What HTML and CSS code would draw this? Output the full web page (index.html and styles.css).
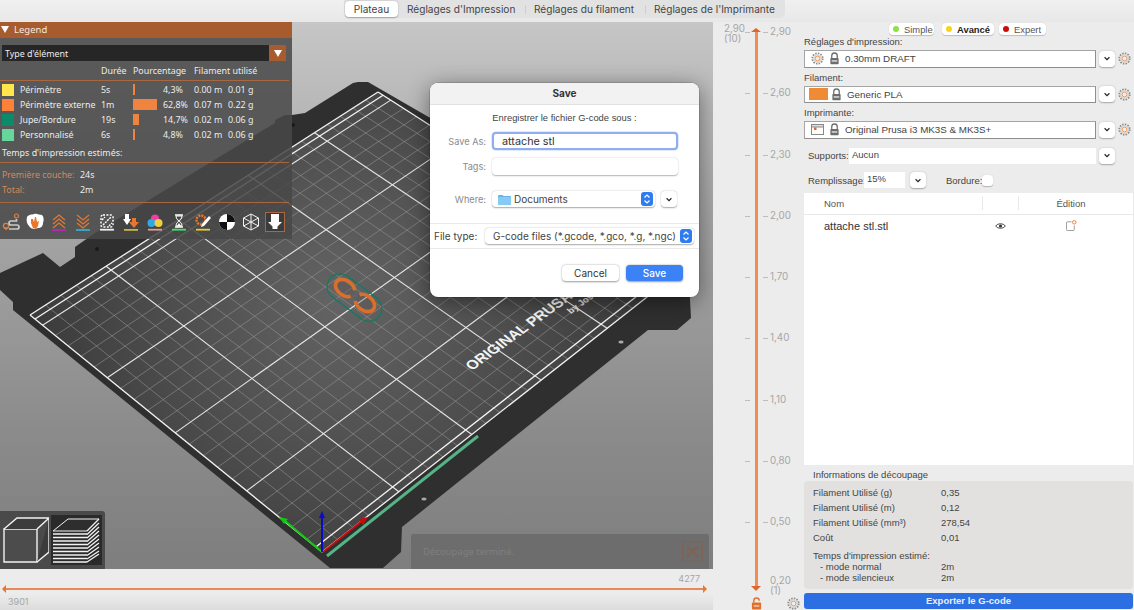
FILE: index.html
```html
<!DOCTYPE html>
<html lang="fr">
<head>
<meta charset="utf-8">
<title>PrusaSlicer</title>
<link rel="stylesheet" href="styles.css">
</head>
<body>
<svg class="defs" width="0" height="0">
  <symbol id="gear" viewBox="0 0 14 14">
    <circle cx="7" cy="7" r="5.6" fill="none" stroke="#8d8d8d" stroke-width="2" stroke-dasharray="1.6 1.3"/>
    <circle cx="7" cy="7" r="4.2" fill="#f0eeec" stroke="#c9c3bd" stroke-width=".8"/>
    <circle cx="7" cy="7" r="2.6" fill="none" stroke="#e8935a" stroke-width="1"/>
  </symbol>
  <symbol id="lock" viewBox="0 0 12 14">
    <path d="M3 6.5V4a3 3 0 0 1 6 0v2.5" fill="none" stroke="#6d6d6d" stroke-width="1.4"/>
    <rect x="1.5" y="6.5" width="9" height="6.8" rx=".8" fill="#6d6d6d"/>
    <rect x="3" y="9" width="6" height="1.4" fill="#eee"/>
  </symbol>
  <symbol id="chev" viewBox="0 0 8 5">
    <path d="M1.6 1.3 4 3.6l2.4-2.3" fill="none" stroke="#222" stroke-width="1.2"/>
  </symbol>
  <symbol id="stepper" viewBox="0 0 12 14">
    <rect width="12" height="14" rx="3" fill="#2f7bf2"/>
    <path d="M3.5 5.5 6 3l2.5 2.5M3.5 8.5 6 11l2.5-2.5" fill="none" stroke="#fff" stroke-width="1.2"/>
  </symbol>
</svg>

<header class="topbar">
  <nav class="tabs">
    <span class="tab tab-on">Plateau</span>
    <span class="tab tab-a">Réglages d'Impression</span>
    <i class="tab-sep"></i>
    <span class="tab tab-b">Réglages du filament</span>
    <i class="tab-sep"></i>
    <span class="tab tab-c">Réglages de l'Imprimante</span>
  </nav>
</header>

<main class="main">
  <div class="left">
    <section class="canvas">
      <svg class="scene" viewBox="0 22 713 547" width="713" height="547">
        <defs>
          <radialGradient id="bed" gradientUnits="userSpaceOnUse" cx="340" cy="300" r="300">
            <stop offset="0" stop-color="#646464"/>
            <stop offset="1" stop-color="#3c3c3c"/>
          </radialGradient>
        </defs>
        <polygon class="plate" points="0,273 43,253 60,267 75,257 75,247 95,233 275,123 275,120 285,115 292,115 305,113 353,83 358,82 368,82 690,268 690,300 691,318 677,330 648,330 402,527 401,552 383,568 330,568 13,310 13,302 0,290"/>
        <circle class="hole" cx="293" cy="125" r="2"/>
        <circle class="hole" cx="97" cy="249" r="2"/>
        <ellipse class="hole-l" cx="424" cy="499" rx="3" ry="2"/>
        <ellipse class="hole-l" cx="621" cy="342" rx="3" ry="2"/>
        <g id="grid"></g>
        <text class="bed-title" transform="translate(472 371) rotate(-36) skewX(14)">ORIGINAL PRUSA i3</text>
        <text class="bed-sub" transform="translate(571 314) rotate(-36) skewX(14)">by Josef Prusa</text>
        <line class="custom" x1="327" y1="556" x2="478" y2="436"/>
        <rect class="skirt" x="-31" y="-13" width="62" height="26" rx="13" transform="translate(354.500 297.500) rotate(37)"/>
        <ellipse class="print-ring" cx="345" cy="288" rx="10.500" ry="7.500" transform="rotate(36 345 288)" stroke-dasharray="49 7" stroke-dashoffset="-3.500"/>
        <ellipse class="print-ring" cx="365" cy="303" rx="10.500" ry="7.500" transform="rotate(36 365 303)" stroke-dasharray="24 8 24 0"/>
        <line class="ax-g" x1="322" y1="552" x2="284" y2="520"/>
        <polygon class="ax-g-h" points="279,517 288,519 284,524"/>
        <line class="ax-b" x1="322" y1="552" x2="322" y2="516"/>
        <polygon class="ax-b-h" points="322,511 325,518 319,518"/>
        <line class="ax-r" x1="323" y1="552" x2="362" y2="521"/>
        <polygon class="ax-r-h" points="368,517 363,525 359,519"/>
      </svg>

      <aside class="legend">
        <h2 class="legend-head"><i class="tri-down"></i>Legend</h2>
        <div class="legend-combo"><span class="combo-text">Type d'élément</span><span class="combo-btn"><i class="tri-down"></i></span></div>
        <div class="lg-row lg-titles"><span></span><span></span><span>Durée</span><span class="span2">Pourcentage</span><span class="span2">Filament utilisé</span></div>
        <hr class="lg-sep lg-sep-a">
        <div class="lg-row"><i class="sw sw-1"></i><span>Périmètre</span><span>5s</span><span><i class="bar" style="width:2px"></i></span><span>4,3%</span><span>0.00 m</span><span>0.01 g</span></div>
        <div class="lg-row"><i class="sw sw-2"></i><span>Périmètre externe</span><span>1m</span><span><i class="bar" style="width:24px"></i></span><span>62,8%</span><span>0.07 m</span><span>0.22 g</span></div>
        <div class="lg-row"><i class="sw sw-3"></i><span>Jupe/Bordure</span><span>19s</span><span><i class="bar" style="width:6px"></i></span><span>14,7%</span><span>0.02 m</span><span>0.06 g</span></div>
        <div class="lg-row"><i class="sw sw-4"></i><span>Personnalisé</span><span>6s</span><span><i class="bar" style="width:2px"></i></span><span>4,8%</span><span>0.02 m</span><span>0.06 g</span></div>
        <p class="lg-est">Temps d'impression estimés:</p>
        <hr class="lg-sep lg-sep-b">
        <div class="lg-time"><span class="lg-key">Première couche:</span><span>24s</span></div>
        <div class="lg-time"><span class="lg-key">Total:</span><span>2m</span></div>
        <hr class="lg-sep lg-sep-c">
        <div class="lg-icons">
          <svg viewBox="0 0 18 18" class="lic"><circle cx="4" cy="13" r="2.600" fill="none" stroke="#d9824a" stroke-width="1.300"/><path d="M4 17.500l-2.300-3.300h4.600z" fill="#d9824a"/><circle cx="14.500" cy="3" r="2" fill="none" stroke="#d9824a" stroke-width="1.200"/><path d="M14.500 6v2H9a2 2 0 0 0 0 4h6a2 2 0 0 1 0 4H7" fill="none" stroke="#c9c9c9" stroke-width="1.700"/></svg>
          <svg viewBox="0 0 18 18" class="lic"><path d="M1 4c2-3 5-2 7-3 3-1 5 1 8 1 2 2 2 5 1 8 0 3-2 5-5 5l-3 1c-3 0-5-1-6-3-2-2-3-5-2-9z" fill="#fff"/><path d="M5 6l2 0 1 3 1-5 1 0 1 5 2-1-1 5-2 3-3-1-2-5z" fill="#e8772e"/></svg>
          <svg viewBox="0 0 18 18" class="lic"><path d="M3 7l6-5 6 5M3 11l6-5 6 5M3 15l6-5 6 5" fill="none" stroke="#e8772e" stroke-width="1.200"/><rect x="2" y="16.200" width="14" height="1.600" fill="#c81fc8"/></svg>
          <svg viewBox="0 0 18 18" class="lic"><path d="M3 2l6 5 6-5M3 6l6 5 6-5M3 10l6 5 6-5" fill="none" stroke="#e8772e" stroke-width="1.200"/><rect x="2" y="16.200" width="14" height="1.600" fill="#3bb4d8"/></svg>
          <svg viewBox="0 0 18 18" class="lic"><rect x="3" y="2" width="12" height="12" rx="2" fill="none" stroke="#fff" stroke-width="1.400" stroke-dasharray="2 1.400"/><path d="M5 12l8-8M4 7l3-3M11 13l3-3" stroke="#fff" stroke-width="1.400" stroke-dasharray="2 1"/><rect x="2" y="15.800" width="14" height="1.800" fill="#eee"/></svg>
          <svg viewBox="0 0 18 18" class="lic"><path d="M3 1h4v5h2l-4 6-4-6h2z" fill="#fff"/><path d="M10 5h4v4h3l-5 6-5-6h3z" fill="#e8772e"/><rect x="2" y="16" width="14" height="1.800" fill="#c8b545"/></svg>
          <svg viewBox="0 0 18 18" class="lic"><circle cx="9" cy="5.500" r="4" fill="#ee3fa0"/><circle cx="5.500" cy="10" r="4" fill="#2fa8e8"/><circle cx="12.500" cy="10" r="4" fill="#f2cf3c"/><rect x="2" y="15.800" width="14" height="1.800" fill="#e59a9a"/></svg>
          <svg viewBox="0 0 18 18" class="lic"><path d="M5 2h8M5 14h8" stroke="#fff" stroke-width="1.500"/><path d="M6 3c0 3 2 4 3 5 1-1 3-2 3-5zM6 13c0-3 2-4 3-5 1 1 3 2 3 5z" fill="none" stroke="#fff" stroke-width="1"/><path d="M7 13l2-3 2 3z" fill="#fff"/><rect x="2" y="15.800" width="14" height="1.800" fill="#3ee06a"/></svg>
          <svg viewBox="0 0 18 18" class="lic"><circle cx="7" cy="7" r="4.500" fill="none" stroke="#e8772e" stroke-width="2.400" stroke-dasharray="2 1"/><path d="M15 3l2 2-7 8-3 1 1-3z" fill="#fff"/><rect x="2" y="15.800" width="14" height="1.800" fill="#e6cb3a"/></svg>
          <svg viewBox="0 0 18 18" class="lic"><circle cx="9" cy="9" r="8" fill="#fff"/><path d="M9 1a8 8 0 0 1 8 8H9zM9 9H1a8 8 0 0 0 8 8z" fill="#111"/></svg>
          <svg viewBox="0 0 18 18" class="lic"><path d="M9 1l7.500 4v8L9 17l-7.500-4V5zM1.500 5 9 9l7.500-4M9 9v8M9 1v8M1.500 13 9 9l7.500 4" fill="none" stroke="#f2f2f2" stroke-width="1"/></svg>
          <span class="lic-on"><svg viewBox="0 0 18 18" class="lic"><path d="M5 1h8v8h3l-4.500 4.500V16h-5v-2.500L2 9h3z" fill="#fff"/></svg></span>
        </div>
      </aside>

      <aside class="views">
        <svg class="view-cube" viewBox="0 0 48 50" width="48" height="50"><path d="M3 14h33v33H3z" fill="#4c4c4c" stroke="#f2f2f2" stroke-width="1.400"/><path d="M3 14 16 3h32L36 14M48 3v34L36 47" fill="#3c3c3c" stroke="#f2f2f2" stroke-width="1.400"/></svg>
        <div class="view-layers"><svg viewBox="0 0 50 50" width="50" height="50"><path d="M2 16 17 4h31L36 16z" fill="#2e2e2e" stroke="#f2f2f2" stroke-width="1"/><path d="M2 19h34M2 22.500h34M2 26h34M2 29.500h34M2 33h34M2 36.500h34M2 40h34M2 43.500h34M2 47h34M36 16 48 4M36 19.500 48 8M36 23 48 12M36 26.500 48 16M36 30 48 20M36 33.500 48 24M36 37 48 28M36 40.500 48 32M36 44 48 36M36 47 48 39" fill="none" stroke="#f2f2f2" stroke-width="1.300"/></svg></div>
      </aside>

      <aside class="note"><span>Découpage terminé.</span><span class="note-x"><svg viewBox="0 0 21 21" width="21" height="21"><rect x=".7" y=".7" width="19.600" height="19.600" rx="1.500" fill="none" stroke="#7f6355" stroke-width="1.200"/><path d="M5 5l11 11M16 5 5 16" stroke="#7f6355" stroke-width="2"/></svg></span></aside>

      <div class="dialog">
        <div class="dlg-title">Save</div>
        <p class="dlg-msg">Enregistrer le fichier G-code sous :</p>
        <div class="dlg-row dlg-saveas"><label>Save As:</label><span class="dlg-input dlg-focus">attache stl</span></div>
        <div class="dlg-row dlg-tags"><label>Tags:</label><span class="dlg-input dlg-plain"></span></div>
        <div class="dlg-row dlg-where"><label>Where:</label>
          <span class="dlg-select"><svg class="folder" viewBox="0 0 13 11" width="13" height="11"><path d="M0 2a1 1 0 0 1 1-1h3.500l1 1H12a1 1 0 0 1 1 1v7a1 1 0 0 1-1 1H1a1 1 0 0 1-1-1z" fill="#62b4ea"/><rect y="3" width="13" height="8" rx="1" fill="#86cbf3"/></svg>Documents<svg class="stepper" width="12" height="14"><use href="#stepper"/></svg></span>
          <span class="dlg-more"><svg width="8" height="5"><use href="#chev"/></svg></span>
        </div>
        <div class="dlg-type"><label>File type:</label><span class="dlg-select dlg-select-type">G-code files (*.gcode, *.gco, *.g, *.ngc)<svg class="stepper" width="12" height="14"><use href="#stepper"/></svg></span></div>
        <div class="dlg-actions"><span class="btn">Cancel</span><span class="btn btn-blue">Save</span></div>
      </div>
    </section>

    <section class="hslider">
      <div class="hs-top">4277</div>
      <div class="hs-line"><i class="tri-l"></i><i class="hs-bar"></i><i class="tri-r"></i></div>
      <div class="hs-bottom">3901</div>
    </section>
  </div>

  <section class="vslider">
    <i class="vs-line"></i><i class="vs-top"></i><i class="vs-bot"></i>
    <div class="vs-row"><span class="vs-left">2,90<br>(10)</span><i class="tick"></i><i class="tick tick-r"></i><span>2,90</span></div>
    <div class="vs-row"><span class="vs-left"></span><i class="tick"></i><i class="tick tick-r"></i><span>2,60</span></div>
    <div class="vs-row"><span class="vs-left"></span><i class="tick"></i><i class="tick tick-r"></i><span>2,30</span></div>
    <div class="vs-row"><span class="vs-left"></span><i class="tick"></i><i class="tick tick-r"></i><span>2,00</span></div>
    <div class="vs-row"><span class="vs-left"></span><i class="tick"></i><i class="tick tick-r"></i><span>1,70</span></div>
    <div class="vs-row"><span class="vs-left"></span><i class="tick"></i><i class="tick tick-r"></i><span>1,40</span></div>
    <div class="vs-row"><span class="vs-left"></span><i class="tick"></i><i class="tick tick-r"></i><span>1,10</span></div>
    <div class="vs-row"><span class="vs-left"></span><i class="tick"></i><i class="tick tick-r"></i><span>0,80</span></div>
    <div class="vs-row"><span class="vs-left"></span><i class="tick"></i><i class="tick tick-r"></i><span>0,50</span></div>
    <div class="vs-end">0,20<br>(1)</div>
    <div class="vs-foot">
      <svg viewBox="0 0 12 14" width="11" height="13"><path d="M3 6V4a3 3 0 0 1 6 0" fill="none" stroke="#e0702c" stroke-width="1.500"/><rect x="1" y="6" width="10" height="7.500" rx=".8" fill="#e0702c"/><rect x="3" y="9" width="6" height="1.400" fill="#f6d7c2"/></svg>
      <svg width="13" height="13" class="vs-gear"><use href="#gear"/></svg>
    </div>
  </section>

  <aside class="side">
    <div class="modes">
      <span class="pill pill-s"><i class="dot dot-g"></i>Simple</span>
      <span class="pill pill-a"><i class="dot dot-y"></i><b>Avancé</b></span>
      <span class="pill pill-e"><i class="dot dot-r"></i>Expert</span>
    </div>
    <div class="p-label">Réglages d'impression:</div>
    <div class="preset"><div class="combo"><svg class="ic-gear" width="13" height="13"><use href="#gear"/></svg><svg class="ic-lock" width="11" height="13"><use href="#lock"/></svg><span>0.30mm DRAFT</span></div><span class="drop"><svg width="8" height="5"><use href="#chev"/></svg></span><svg class="gear-r" width="13" height="13"><use href="#gear"/></svg></div>
    <div class="p-label">Filament:</div>
    <div class="preset"><div class="combo"><i class="fil-color"></i><svg class="ic-lock" width="11" height="13"><use href="#lock"/></svg><span>Generic PLA</span></div><span class="drop"><svg width="8" height="5"><use href="#chev"/></svg></span><svg class="gear-r" width="13" height="13"><use href="#gear"/></svg></div>
    <div class="p-label">Imprimante:</div>
    <div class="preset"><div class="combo"><svg class="ic-gear" viewBox="0 0 13 11" width="13" height="11"><rect x=".5" y=".5" width="12" height="10" fill="#fff" stroke="#888"/><rect x=".5" y=".5" width="12" height="2.500" fill="#ddd" stroke="#888"/><rect x="3" y="3.500" width="2.500" height="2.500" fill="#e8602c"/></svg><svg class="ic-lock" width="11" height="13"><use href="#lock"/></svg><span>Original Prusa i3 MK3S &amp; MK3S+</span></div><span class="drop"><svg width="8" height="5"><use href="#chev"/></svg></span><svg class="gear-r" width="13" height="13"><use href="#gear"/></svg></div>

    <div class="opt opt-support"><label>Supports:</label><span class="field field-wide">Aucun</span><span class="drop"><svg width="8" height="5"><use href="#chev"/></svg></span></div>
    <div class="opt opt-fill"><label>Remplissage:</label><span class="field field-fill">15%</span><span class="drop"><svg width="8" height="5"><use href="#chev"/></svg></span><label class="brim">Bordure:</label><i class="check"></i></div>

    <div class="objects">
      <div class="obj-head"><span class="oc-name">Nom</span><span class="oc-eye"></span><span class="oc-edit">Édition</span></div>
      <div class="obj-row"><span class="oc-name">attache stl.stl</span>
        <span class="oc-eye"><svg viewBox="0 0 12 8" width="11" height="8"><path d="M.7 4C3 .8 9 .8 11.300 4 9 7.200 3 7.200.7 4z" fill="none" stroke="#333" stroke-width="1"/><circle cx="6" cy="4" r="1.700" fill="#333"/></svg></span>
        <span class="oc-edit"><svg viewBox="0 0 12 12" width="11" height="11"><path d="M6 2H1.500a1 1 0 0 0-1 1v7.500a1 1 0 0 0 1 1H8a1 1 0 0 0 1-1V6" fill="none" stroke="#888" stroke-width=".9"/><circle cx="9" cy="2.500" r="1.900" fill="none" stroke="#e8772e" stroke-width="1"/></svg></span>
      </div>
    </div>

    <div class="info-title">Informations de découpage</div>
    <div class="info">
      <div class="i-row"><span>Filament Utilisé (g)</span><span>0,35</span></div>
      <div class="i-row"><span>Filament Utilisé (m)</span><span>0,12</span></div>
      <div class="i-row"><span>Filament Utilisé (mm³)</span><span>278,54</span></div>
      <div class="i-row"><span>Coût</span><span>0,01</span></div>
      <div class="i-row i-tight i-first"><span>Temps d'impression estimé:</span><span></span></div>
      <div class="i-row i-tight"><span class="i-ind">- mode normal</span><span>2m</span></div>
      <div class="i-row i-tight"><span class="i-ind">- mode silencieux</span><span>2m</span></div>
    </div>
    <div class="export">Exporter le G-code</div>
  </aside>
</main>
<script src="script.js"></script>
</body>
</html>
```
FILE: styles.css
```css
*{box-sizing:border-box;margin:0;padding:0}
html,body{width:1134px;height:610px;overflow:hidden}
body{background:#ececec;font-family:"Liberation Sans",Inter,sans-serif;font-size:9.5px;color:#3c3c3c;display:flex;flex-direction:column}
i{display:block;font-style:normal}
.defs{position:absolute}

.topbar{height:22px;flex:none;background:linear-gradient(#f0f0f0,#e8e8e8)}
.tabs{margin-left:344px;width:441px;height:18px;background:#e2e2e2;border-radius:0 0 5px 5px;display:flex;align-items:center;font-family:Inter,sans-serif;font-size:10.100px;color:#444}
.tab{white-space:nowrap}
.tab-on{margin-left:1px;width:53px;height:16px;line-height:16px;text-align:center;background:#fff;border-radius:4px;box-shadow:0 .5px 1.500px rgba(0,0,0,.3)}
.tab-a{margin-left:9px;width:118px}
.tab-b{margin-left:8px;width:111px}
.tab-c{margin-left:8px}
.tab-sep{width:1px;height:9px;background:#cfcfcf}

.main{flex:1;display:flex;min-height:0}
.left{width:713px;flex:none;display:flex;flex-direction:column}
.canvas{position:relative;height:547px;flex:none;overflow:hidden;background:linear-gradient(#c6c6c6 0,#a6a6a6 35%,#8b8b8b 75%,#7e7e7e 100%)}
.scene{display:block}
.plate{fill:#2f2f2f}
.hole{fill:#191919}
.hole-l{fill:#a8a8a8;stroke:#161616;stroke-width:.7}
.surface{fill:url(#bed)}
.minor{stroke:#929292;stroke-width:.6}
.major{stroke:#e6e6e6;stroke-width:1.100}
.frame{stroke:#f4f4f4;stroke-width:1.300}
.bed-title{font:700 14.500px "Liberation Sans",sans-serif;fill:#f4f4f4}
.bed-sub{font:700 9px "Liberation Sans",sans-serif;fill:#e4e4e4}
.custom{stroke:#55b485;stroke-width:3}
.skirt{fill:none;stroke:#0f7b63;stroke-width:1.200}
.print-ring{fill:rgba(90,80,75,.3);stroke:#d8702c;stroke-width:3.600}
.ax-g{stroke:#12c812;stroke-width:2}.ax-g-h{fill:#12c812}
.ax-b{stroke:#0b0bc0;stroke-width:2}.ax-b-h{fill:#0b0bc0}
.ax-r{stroke:#c80c0c;stroke-width:2}.ax-r-h{fill:#c80c0c}

.legend{position:absolute;left:0;top:0;width:292px;height:217px;background:rgba(72,72,72,.86);font-family:"Noto Sans",sans-serif;font-size:8.900px;color:#ececec}
.legend-head{height:16px;background:#a85c2e;font-weight:400;font-size:9.500px;line-height:16px;padding-left:14px;position:relative;color:#f2e8e0}
.legend-head .tri-down{position:absolute;left:1px;top:4px}
.tri-down{width:0;height:0;border-left:4px solid transparent;border-right:4px solid transparent;border-top:7px solid #fff}
.legend-combo{margin:7px 0 0 2px;width:284px;height:16px;display:flex;background:#262626}
.combo-text{flex:1;line-height:17px;padding-left:3px}
.combo-btn{width:17px;background:#a85c2e;display:flex;align-items:center;justify-content:center}
.lg-row{height:15px;line-height:15px;padding-left:2px;display:grid;grid-template-columns:18px 81px 32px 30px 31px 34px 1fr;align-items:center;white-space:nowrap}
.lg-titles{margin-top:3px;height:14px;line-height:14px}
.lg-titles .span2:nth-child(4){grid-column:4/span 2}
.lg-titles .span2:nth-child(5){grid-column:6/span 2}
.lg-sep{border:0;height:1px;background:#a8673e;margin-left:0;width:289px}
.lg-sep-a{margin-top:2px;margin-bottom:1px}
.sw{width:12px;height:12px}
.sw-1{background:#ffe64d}.sw-2{background:#ff8038}.sw-3{background:#0d8a6a}.sw-4{background:#66d69b}
.bar{height:11px;background:#ee8440}
.lg-est{margin-top:3.500px;height:14px;line-height:14px;padding-left:2px}
.lg-sep-b{margin-top:2px;margin-bottom:4px}
.lg-time{height:15px;line-height:15px;display:grid;grid-template-columns:78px 1fr;padding-left:2px;white-space:nowrap}
.lg-key{color:#d08a5c}
.lg-sep-c{margin-top:5px}
.lg-icons{display:flex;gap:6px;padding:10px 0 0 2px}
.lic{width:18px;height:18px;display:block;flex:none}
.lic-on{display:block;outline:1px solid #a8673e;width:18px;height:18px;background:#3c3c3c}

.views{position:absolute;left:0;bottom:0;width:105px;height:58px;background:#4a4a4a;border-radius:0 3px 0 0;display:flex;align-items:center;gap:2px;padding-left:1px}
.view-cube{flex:none}
.view-layers{width:51px;height:50px;background:#2a2a2a;flex:none}
.view-layers svg{display:block}

.note{position:absolute;left:411px;bottom:0;width:298px;height:35px;background:#6d6d6d;border-radius:2px 2px 0 0;display:flex;align-items:center;justify-content:space-between;padding:0 6px 0 12px;font-family:"Noto Sans",sans-serif;font-size:9.500px;color:#7f7f7f}
.note-x{display:block;height:21px}

.dialog{position:absolute;left:430px;top:61px;width:269px;height:214px;background:#fff;border-radius:8px;box-shadow:0 4px 22px rgba(0,0,0,.45),0 0 0 .5px rgba(0,0,0,.25);font-family:Inter,sans-serif;font-size:9.500px;color:#444;overflow:hidden}
.dlg-title{height:22px;line-height:21px;text-align:center;font-weight:700;font-size:10px;color:#333;background:#f2f2f2;border-bottom:1px solid #e2e2e2}
.dlg-msg{height:14px;line-height:14px;margin-top:6px;text-align:center;font-family:"Liberation Sans",sans-serif;font-size:9.400px}
.dlg-row{display:flex;align-items:center}
.dlg-row label{width:56px;text-align:right;margin-right:6px;color:#8a8a8a;flex:none;font-size:9.200px}
.dlg-saveas{height:18px;margin-top:7px}
.dlg-tags{height:17px;margin-top:8px}
.dlg-where{height:16px;margin-top:16px}
.dlg-input{display:block;width:186px;background:#fff;border-radius:4px}
.dlg-focus{height:18px;line-height:16px;font-size:10.800px;color:#333;padding-left:8px;border:2px solid #8fadf0;box-shadow:0 0 0 .5px #c4d5f8}
.dlg-plain{height:17px;box-shadow:0 .5px 1.500px rgba(0,0,0,.3)}
.dlg-select{display:flex;align-items:center;width:163px;height:16px;border-radius:4px;background:#fff;box-shadow:0 .5px 1.500px rgba(0,0,0,.35);padding-left:6px;font-size:10px;color:#444;position:relative}
.folder{margin-right:3px;flex:none}
.stepper{position:absolute;right:2px;top:1px}
.dlg-more{width:16px;height:16px;margin-left:6px;display:flex;align-items:center;justify-content:center;border-radius:4px;box-shadow:0 .5px 1.500px rgba(0,0,0,.35)}
.dlg-type{margin-top:16px;height:26px;border-top:1px solid #e8e8e8;border-bottom:1px solid #e8e8e8;display:flex;align-items:center;padding-left:4px}
.dlg-type label{font-size:10px;width:51px;flex:none;color:#444}
.dlg-select-type{width:209px;padding-left:8px;white-space:nowrap}
.dlg-actions{display:flex;gap:7px;justify-content:flex-end;margin-top:16px;padding-right:16px}
.btn{display:block;width:57px;height:16px;line-height:16px;text-align:center;border-radius:4px;font-size:10px;color:#333;background:#fff;box-shadow:0 .5px 2px rgba(0,0,0,.4)}
.btn-blue{background:#3b82f6;color:#fff;font-weight:500}

.hslider{flex:1;display:flex;flex-direction:column;background:linear-gradient(#ececec 60%,#dcdcdc)}
.hs-top{height:15px;line-height:19px;padding-right:13px;text-align:right;color:#a6a6a6;font-family:Inter,sans-serif;font-size:9px}
.hs-line{height:10px;display:flex;align-items:center;padding-left:2px}
.hs-bar{width:697px;height:2px;background:#e8885a}
.tri-l{border-top:4px solid transparent;border-bottom:4px solid transparent;border-right:4px solid #e8772e}
.tri-r{border-top:4px solid transparent;border-bottom:4px solid transparent;border-left:4px solid #e8772e}
.hs-bottom{padding-left:8px;color:#a6a6a6;font-family:Inter,sans-serif;font-size:9px;line-height:12px;margin-top:2px}

.vslider{width:90px;flex:none;position:relative;padding-top:4px;color:#a6a6a6;font-family:Inter,sans-serif;font-size:9.800px}
.vs-line{position:absolute;left:42px;top:10px;bottom:22px;width:2.500px;background:#ee8f52}
.vs-top{position:absolute;left:38px;top:6px;border-left:5px solid transparent;border-right:5px solid transparent;border-bottom:4px solid #e0662a}
.vs-bot{position:absolute;left:38px;bottom:19px;border-left:5px solid transparent;border-right:5px solid transparent;border-top:5px solid #e0662a}
.vs-row{height:61.300px;display:flex;align-items:flex-start;line-height:12px;padding-left:11px}
.vs-left{display:block;width:21px;line-height:10.400px;margin-top:-2px}
.tick{width:5px;height:1px;background:#bdbdbd;margin-top:6px;flex:none}
.tick-r{margin-left:13px;margin-right:2px}
.vs-end{margin:-2px 0 0 57px;line-height:10px;height:20px}
.vs-foot{display:flex;align-items:center;padding-left:38px;height:15px}
.vs-gear{margin-left:25px}

.side{width:331px;flex:none;display:flex;flex-direction:column;padding:1px}
.modes{height:12px;display:flex;padding-left:85px;font-size:9.400px}
.pill{display:flex;align-items:center;height:12px;background:#fff;border-radius:4px;box-shadow:0 .5px 1px rgba(0,0,0,.2);padding-left:4px;color:#555}
.pill-s{width:45px}.pill-a{width:52px;margin-left:8px;color:#222}.pill-e{width:47px;margin-left:5px}
.dot{width:6px;height:6px;border-radius:50%;margin-right:5px}
.dot-g{background:#8fe04a}.dot-y{background:#f5d51e}.dot-r{background:#c80f0f}
.p-label{height:14px;line-height:14px;font-size:9.500px;color:#444;white-space:nowrap}
.preset{display:flex;align-items:center;height:17.500px;margin-top:1px;margin-bottom:3px}
.combo{width:292px;height:17.500px;background:#fff;border:1.500px solid #a5a5a5;border-right-color:#8e8e8e;border-bottom-color:#8e8e8e;display:flex;align-items:center;padding-left:6px;font-size:9.800px;color:#444;white-space:nowrap}
.ic-gear{flex:none;margin-right:5px}
.ic-lock{flex:none;margin-right:5px}
.fil-color{width:19px;height:12px;background:#ef8a35;margin:0 3px 0 -2px;flex:none}
.drop{display:flex;align-items:center;justify-content:center;width:16px;height:16px;background:#fff;border-radius:4px;box-shadow:0 .5px 1.500px rgba(0,0,0,.3);margin-left:3px;flex:none}
.gear-r{margin-left:3px;flex:none}
.opt{display:flex;align-items:center;height:16px;color:#444}
.opt label{flex:none}
.opt-support{margin-top:6px;padding-left:4px}
.opt-support label{width:41px}
.field{display:block;height:16px;line-height:13px;background:#fff;padding-left:3px;color:#444}
.field-wide{width:247px}
.opt-fill{margin-top:8.500px;padding-left:4px}
.opt-fill label:first-child{width:56px}
.field-fill{width:41px}
.opt-fill .drop{margin-left:5px}
.brim{margin-left:20px;width:36px}
.check{width:11px;height:11px;background:#fff;border-radius:3px;box-shadow:0 .5px 1px rgba(0,0,0,.25)}
.objects{margin-top:4.500px;flex:1;background:#fff;min-height:0}
.obj-head,.obj-row{display:grid;grid-template-columns:178px 37px 1fr;align-items:center}
.obj-head{height:22px;border-bottom:1px solid #e8e8e8;color:#555}
.obj-row{height:22px;font-size:11px;color:#333}
.oc-name{padding-left:20px}
.oc-eye{display:flex;justify-content:center;align-items:center;height:14px}
.obj-head .oc-eye{border-left:1px solid #e8e8e8;border-right:1px solid #e8e8e8}
.oc-edit{display:flex;justify-content:center;padding-right:10px}
.info-title{height:15px;line-height:18px;margin-top:1px;padding-left:9px;color:#444}
.info{height:108px;background:#e2e1e0;border-radius:4px;padding:5px 0 0 9px}
.i-row{display:grid;grid-template-columns:128px 1fr;height:15px;line-height:14px;color:#444}
.i-tight{height:11px;line-height:11px}
.i-first{margin-top:4px}
.i-ind{padding-left:7px}
.export{margin-top:4px;height:16px;line-height:15px;background:#2b6fe3;border-radius:3px;text-align:center;color:#e8effb;font-weight:700}
```
FILE: script.js
```js
(function () {
  var NS = 'http://www.w3.org/2000/svg';
  var O = [322, 552], R = [670, 279], L = [30, 315], T = [378, 92];
  var dx1 = R[0] - T[0], dx2 = L[0] - T[0], sx = O[0] - R[0] + T[0] - L[0];
  var dy1 = R[1] - T[1], dy2 = L[1] - T[1], sy = O[1] - R[1] + T[1] - L[1];
  var det = dx1 * dy2 - dx2 * dy1;
  var g = (sx * dy2 - dx2 * sy) / det, h = (dx1 * sy - sx * dy1) / det;
  var a = R[0] - O[0] + g * R[0], b = L[0] - O[0] + h * L[0];
  var d = R[1] - O[1] + g * R[1], e = L[1] - O[1] + h * L[1];
  function map(x, y) {
    var u = x / 250, v = y / 210, w = g * u + h * v + 1;
    return [(a * u + b * v + O[0]) / w, (d * u + e * v + O[1]) / w];
  }
  var root = document.getElementById('grid');
  var bed = document.createElementNS(NS, 'polygon');
  bed.setAttribute('class', 'surface');
  bed.setAttribute('points', [O, R, T, L].join(' '));
  root.appendChild(bed);
  function line(x1, y1, x2, y2, cls) {
    var p = map(x1, y1), q = map(x2, y2), el = document.createElementNS(NS, 'line');
    el.setAttribute('x1', p[0]); el.setAttribute('y1', p[1]);
    el.setAttribute('x2', q[0]); el.setAttribute('y2', q[1]);
    el.setAttribute('class', cls);
    root.appendChild(el);
  }
  var x, y;
  for (x = 10; x < 250; x += 10) if (x % 50) line(x, 0, x, 210, 'minor');
  for (y = 10; y < 210; y += 10) if (y % 50) line(0, y, 250, y, 'minor');
  for (x = 50; x < 250; x += 50) line(x, 0, x, 210, 'major');
  for (y = 50; y < 210; y += 50) line(0, y, 250, y, 'major');
  line(0, 0, 250, 0, 'frame');
  line(0, 4, 250, 4, 'frame');
  line(0, 206, 250, 206, 'frame');
  line(0, 210, 250, 210, 'frame');
  line(0, 0, 0, 210, 'frame');
  line(250, 0, 250, 210, 'frame');
})();
```
